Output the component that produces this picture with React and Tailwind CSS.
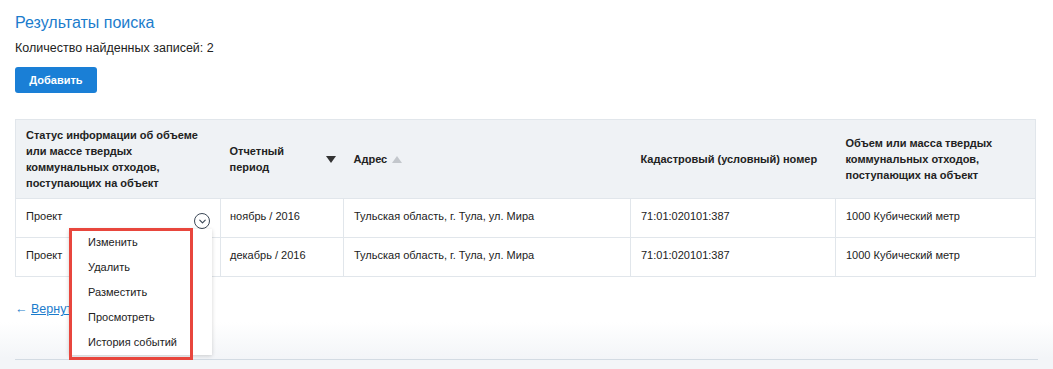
import { ChevronDown } from "lucide-react";

const rows = [
  { status: "Проект", period: "ноябрь / 2016", address: "Тульская область, г. Тула, ул. Мира", cadastre: "71:01:020101:387", amount: "1000 Кубический метр" },
  { status: "Проект", period: "декабрь / 2016", address: "Тульская область, г. Тула, ул. Мира", cadastre: "71:01:020101:387", amount: "1000 Кубический метр" },
];

const menuItems = ["Изменить", "Удалить", "Разместить", "Просмотреть", "История событий"];

const App = () => {
  return (
    <div
      className="min-h-[369px] bg-[linear-gradient(to_bottom,#ffffff_322px,#f3f5f8_358px)] text-[#222] font-['Liberation_Sans',Arial,sans-serif]"
    >
      <div className="px-[15px] pt-[13px]">
        <h1 className="text-[16px] leading-[20px] text-[#1b7ccc]">Результаты поиска</h1>
        <p className="text-[12.5px] leading-[16px] mt-[7px]">Количество найденных записей: 2</p>
        <button className="mt-[11px] w-[82px] h-[26px] rounded-[3px] bg-[#1a7fd6] text-white text-[11px] font-bold">
          Добавить
        </button>

        {/* TABLE */}
        <table className="mt-[26px] w-[1020px] border-collapse table-fixed text-[11px]">
          <colgroup>
            <col className="w-[205px]" />
            <col className="w-[123px]" />
            <col className="w-[287px]" />
            <col className="w-[205px]" />
            <col className="w-[200px]" />
          </colgroup>
          <thead>
            <tr className="h-[79px] bg-[#eff2f5] border border-[#e1e6eb]">
              <th className="px-[10px] text-left font-bold leading-[16px] align-middle">
                Статус информации об объеме или массе твердых коммунальных отходов, поступающих на объект
              </th>
              <th className="pl-[9px] pr-[8px] text-left font-bold leading-[16px] align-middle">
                <div className="flex items-center justify-between">
                  <span>Отчетный<br />период</span>
                  <span className="w-0 h-0 border-l-[5px] border-r-[5px] border-t-[7px] border-l-transparent border-r-transparent border-t-[#333]" />
                </div>
              </th>
              <th className="px-[10px] text-left font-bold leading-[16px] align-middle">
                <div className="flex items-center gap-[5px]">
                  <span>Адрес</span>
                  <span className="w-0 h-0 border-l-[5px] border-r-[5px] border-b-[7px] border-l-transparent border-r-transparent border-b-[#c3c7cc]" />
                </div>
              </th>
              <th className="px-[10px] text-left font-bold leading-[16px] align-middle">
                Кадастровый (условный) номер
              </th>
              <th className="px-[10px] text-left font-bold leading-[16px] align-middle">
                Объем или масса твердых коммунальных отходов, поступающих на объект
              </th>
            </tr>
          </thead>
          <tbody>
            {rows.map((r, i) => (
              <tr key={i} className="h-[39px] border border-[#e1e6eb]">
                <td className="relative border border-[#e1e6eb] px-[10px] pt-[10px] pb-[13px] align-top leading-[15px]">
                  {r.status}
                  {i === 0 && (
                    <>
                      <span className="absolute right-[10px] top-[14px] flex items-center justify-center w-[16px] h-[16px] rounded-full border-[1.5px] border-[#3b4756] text-[#3b4756]">
                        <ChevronDown size={11} strokeWidth={2.5} />
                      </span>
                      {/* ACTION MENU */}
                      <div className="absolute z-10 left-[53px] top-[30px] w-[143px] h-[126px] bg-white shadow-[0_1px_4px_rgba(0,0,0,0.18)] pt-[1px]">
                        {menuItems.map((m) => (
                          <div key={m} className="h-[25px] leading-[25px] pl-[19px] text-[11px] text-[#222]">
                            {m}
                          </div>
                        ))}
                      </div>
                      <div className="absolute z-20 left-[53px] top-[29px] w-[124px] h-[132px] border-[3px] border-[#e8463d] pointer-events-none" />
                    </>
                  )}
                </td>
                <td className="border border-[#e1e6eb] pl-[9px] pt-[10px] pb-[13px] align-top leading-[15px]">{r.period}</td>
                <td className="border border-[#e1e6eb] pl-[10px] pt-[10px] pb-[13px] align-top leading-[15px]">{r.address}</td>
                <td className="border border-[#e1e6eb] pl-[10px] pt-[10px] pb-[13px] align-top leading-[15px]">{r.cadastre}</td>
                <td className="border border-[#e1e6eb] pl-[10px] pt-[10px] pb-[13px] align-top leading-[15px]">{r.amount}</td>
              </tr>
            ))}
          </tbody>
        </table>

        {/* BACK LINK */}
        <div className="mt-[24px] text-[12.5px] leading-[16px]">
          <span className="text-[#1b7ccc]">← </span>
          <a href="#" className="text-[#1b7ccc] underline">Вернуться</a>
        </div>
      </div>

      {/* FOOTER LINE */}
      <div className="mt-[42px] mx-[15px] border-t border-[#d3dbe3]" />
    </div>
  );
};

export default App;
